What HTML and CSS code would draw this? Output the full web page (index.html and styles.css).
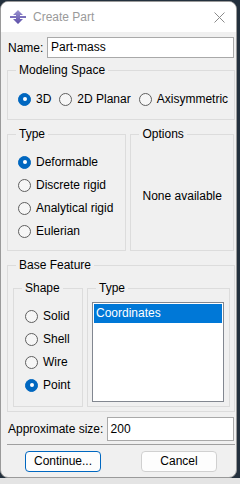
FILE: index.html
```html
<!DOCTYPE html>
<html>
<head>
<meta charset="utf-8">
<link rel="stylesheet" href="styles.css">
</head>
<body>
<div class="window">
  <div class="titlebar">
    <svg class="app-icon" width="16" height="14" viewBox="0 0 16 14">
      <defs>
        <linearGradient id="g" x1="0" y1="0" x2="0" y2="1">
          <stop offset="0" stop-color="#9a92d0"/>
          <stop offset="1" stop-color="#5c4fa8"/>
        </linearGradient>
      </defs>
      <path d="M8 0 L13 5 L10 5 L10 6 L16 6 L16 8 L10 8 L10 9 L13 9 L8 14 L3 9 L6 9 L6 8 L0 8 L0 6 L6 6 L6 5 L3 5 Z" fill="url(#g)"/>
    </svg>
    <span class="title">Create Part</span>
    <svg class="close" width="11" height="11" viewBox="0 0 11 11">
      <path d="M0.5 0.5 L10.5 10.5 M10.5 0.5 L0.5 10.5" stroke="#8a8a8a" stroke-width="1" fill="none"/>
    </svg>
  </div>
  <div class="content">
    <div class="name-row">
      <label class="lbl">Name:</label>
      <div class="textbox name-box">Part-mass</div>
    </div>

    <fieldset class="group modeling">
      <legend>Modeling Space</legend>
      <div class="hradios">
        <span class="radio checked"></span><span class="rtext">3D</span>
        <span class="radio"></span><span class="rtext">2D Planar</span>
        <span class="radio"></span><span class="rtext">Axisymmetric</span>
      </div>
    </fieldset>

    <div class="two-col">
      <fieldset class="group type-group">
        <legend>Type</legend>
        <div class="vradios">
          <div class="ritem"><span class="radio checked"></span><span class="rtext">Deformable</span></div>
          <div class="ritem"><span class="radio"></span><span class="rtext">Discrete rigid</span></div>
          <div class="ritem"><span class="radio"></span><span class="rtext">Analytical rigid</span></div>
          <div class="ritem"><span class="radio"></span><span class="rtext">Eulerian</span></div>
        </div>
      </fieldset>
      <fieldset class="group options-group">
        <legend>Options</legend>
        <div class="none-avail">None available</div>
      </fieldset>
    </div>

    <fieldset class="group base">
      <legend>Base Feature</legend>
      <div class="base-row">
        <fieldset class="group shape">
          <legend>Shape</legend>
          <div class="vradios shape-radios">
            <div class="ritem"><span class="radio"></span><span class="rtext">Solid</span></div>
            <div class="ritem"><span class="radio"></span><span class="rtext">Shell</span></div>
            <div class="ritem"><span class="radio"></span><span class="rtext">Wire</span></div>
            <div class="ritem"><span class="radio checked"></span><span class="rtext">Point</span></div>
          </div>
        </fieldset>
        <fieldset class="group subtype">
          <legend>Type</legend>
          <div class="listbox">
            <div class="list-item selected">Coordinates</div>
          </div>
        </fieldset>
      </div>
    </fieldset>

    <div class="size-row">
      <label class="lbl">Approximate size:</label>
      <div class="textbox size-box">200</div>
    </div>

    <div class="separator"></div>

    <div class="buttons">
      <div class="btn default">Continue...</div>
      <div class="btn">Cancel</div>
    </div>
  </div>
</div>
<div class="bottom-strip"></div>
</body>
</html>
```

FILE: styles.css
```css
html, body {
  margin: 0;
  padding: 0;
}
body {
  width: 240px;
  height: 484px;
  background: #23303d;
  font-family: "Liberation Sans", Arial, sans-serif;
  font-size: 12px;
  color: #000;
  overflow: hidden;
  position: relative;
}
.window {
  width: 235px;
  height: 475px;
  margin-top: 1px;
  border: 1px solid #9a9a9a;
  border-radius: 8px;
  background: #f0f0f0;
  overflow: hidden;
  display: flex;
  flex-direction: column;
  position: relative;
  z-index: 1;
}
.bottom-strip {
  height: 7px;
  background: #e4e4e4;
}
.titlebar {
  height: 30px;
  background: #ffffff;
  display: flex;
  align-items: center;
  padding-left: 9px;
  padding-right: 9px;
}
.app-icon {
  display: block;
}
.title {
  margin-left: 7px;
  color: #9a9a9a;
  flex: 1;
}
.close {
  display: block;
  margin-right: 2px;
}
.content {
  padding: 5px 2px 0 5px;
  display: flex;
  flex-direction: column;
}
.name-row {
  display: flex;
  align-items: center;
  height: 21px;
}
.lbl {
  padding-left: 2px;
  width: 39px;
  white-space: nowrap;
}
.textbox {
  background: #fff;
  border: 1px solid #a9a9a9;
  box-sizing: border-box;
  padding-left: 3px;
  line-height: 18px;
}
.name-box {
  width: 187px;
  height: 21px;
}
.group {
  margin: 0;
  padding: 0;
  border: 1px solid #dcdcdc;
  min-width: 0;
  box-sizing: border-box;
}
.group legend {
  margin-left: 8px;
  padding: 0 3px;
  line-height: 16px;
  height: 16px;
}
.modeling {
  margin-top: 4px;
  width: 228px;
  margin-left: 1px;
}
.hradios {
  display: flex;
  align-items: center;
  height: 16px;
  padding: 13px 0 12px 10px;
}
.radio {
  width: 11px;
  height: 11px;
  border: 1px solid #5f5f5f;
  border-radius: 50%;
  background: #f6f6f6;
  flex: none;
  box-sizing: content-box;
  position: relative;
}
.radio.checked {
  background: #0067c0;
  border-color: #0067c0;
}
.radio.checked::after {
  content: "";
  position: absolute;
  left: 3.5px;
  top: 3.5px;
  width: 4px;
  height: 4px;
  border-radius: 50%;
  background: #fff;
}
.rtext {
  margin-left: 5px;
  margin-right: 8px;
  white-space: nowrap;
}
.two-col {
  display: flex;
  gap: 4px;
  margin-top: 6px;
  margin-left: 1px;
}
.type-group {
  width: 120px;
  height: 125px;
}
.options-group {
  width: 104px;
  height: 125px;
}
.vradios {
  display: flex;
  flex-direction: column;
  gap: 7px;
  padding: 12px 0 0 10px;
}
.ritem {
  display: flex;
  align-items: center;
  height: 16px;
}
.none-avail {
  text-align: center;
  padding-top: 47px;
  white-space: nowrap;
}
.base {
  margin-top: 6px;
  margin-left: 1px;
  width: 228px;
  height: 155px;
}
.base-row {
  display: flex;
  gap: 4px;
  margin-top: 7px;
  padding-left: 5px;
}
.shape {
  width: 70px;
  height: 127px;
}
.shape-radios {
  padding: 12px 0 0 11px;
}
.subtype {
  width: 143px;
  height: 127px;
}
.listbox {
  margin: 6px 0 0 4px;
  width: 132px;
  height: 100px;
  background: #fff;
  border: 1px solid #828790;
  box-sizing: border-box;
  padding: 1px;
}
.list-item {
  height: 19px;
  line-height: 19px;
  padding-left: 2px;
}
.list-item.selected {
  background: #0078d7;
  color: #fff;
}
.size-row {
  display: flex;
  align-items: center;
  margin-top: 5px;
  height: 24px;
}
.size-row .lbl {
  width: 99px;
}
.size-box {
  width: 128px;
  height: 24px;
  line-height: 22px;
}
.separator {
  margin-top: 3px;
  margin-left: 1px;
  width: 228px;
  height: 1px;
  background: #a0a0a0;
}
.buttons {
  display: flex;
  gap: 40px;
  margin-top: 6px;
  padding-left: 19px;
}
.btn {
  width: 76px;
  height: 21px;
  box-sizing: border-box;
  border: 1px solid #d0d0d0;
  border-radius: 4px;
  background: #fdfdfd;
  text-align: center;
  line-height: 19px;
}
.btn.default {
  border-color: #0067c0;
}
```
